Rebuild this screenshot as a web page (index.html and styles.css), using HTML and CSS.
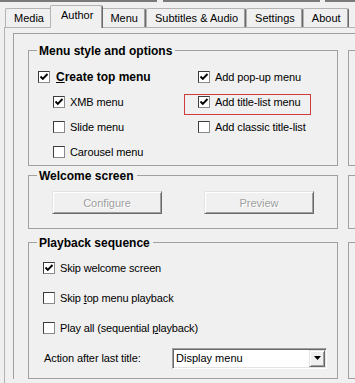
FILE: index.html
```html
<!DOCTYPE html>
<html>
<head>
<meta charset="utf-8">
<link rel="stylesheet" href="styles.css">
</head>
<body>
<div class="topbar"><span class="seg seg-a"></span><span class="seg seg-b"></span><span class="seg seg-c"></span></div>
<div class="tabs">
  <div class="tab">Media</div>
  <div class="tab active">Author</div>
  <div class="tab">Menu</div>
  <div class="tab">Subtitles &amp; Audio</div>
  <div class="tab">Settings</div>
  <div class="tab">About</div>
</div>
<div class="panel">
  <div class="frame">
    <div class="grid">
      <section class="group">
        <div class="gtitle">Menu style and options</div>
        <div class="g1body">
          <div class="col-left">
            <div class="opt main"><span class="cb"><svg viewBox="0 0 10 10"><polyline points="1.5,4.5 3.8,6.8 8.5,2"/></svg></span><span class="blabel"><u>C</u>reate top menu</span></div>
            <div class="opt sub"><span class="cb"><svg viewBox="0 0 10 10"><polyline points="1.5,4.5 3.8,6.8 8.5,2"/></svg></span><span>XMB menu</span></div>
            <div class="opt sub"><span class="cb"></span><span>Slide menu</span></div>
            <div class="opt sub"><span class="cb"></span><span>Carousel menu</span></div>
          </div>
          <div class="col-right">
            <div class="ropt"><span class="cb"><svg viewBox="0 0 10 10"><polyline points="1.5,4.5 3.8,6.8 8.5,2"/></svg></span><span>Add pop-up menu</span></div>
            <div class="ropt hl"><span class="cb"><svg viewBox="0 0 10 10"><polyline points="1.5,4.5 3.8,6.8 8.5,2"/></svg></span><span>Add title-list menu</span></div>
            <div class="ropt last"><span class="cb"></span><span>Add classic title-list</span></div>
          </div>
        </div>
      </section>
      <div class="ghost"></div>

      <section class="group row2">
        <div class="gtitle">Welcome screen</div>
        <div class="g2body">
          <div class="btn disabled">Configure</div>
          <div class="btn disabled">Preview</div>
        </div>
      </section>
      <div class="ghost row2"></div>

      <section class="group row3">
        <div class="gtitle">Playback sequence</div>
        <div class="g3body">
          <div class="opt3"><span class="cb"><svg viewBox="0 0 10 10"><polyline points="1.5,4.5 3.8,6.8 8.5,2"/></svg></span><span>Skip welcome screen</span></div>
          <div class="opt3"><span class="cb"></span><span>Skip <u>t</u>op menu playback</span></div>
          <div class="opt3"><span class="cb"></span><span>Play all (sequential <u>p</u>layback)</span></div>
          <div class="action">
            <span class="alabel">Action after last title:</span>
            <div class="select"><span class="sel-text">Display menu</span><span class="sel-btn"><svg viewBox="0 0 7 4"><polygon points="0,0 7,0 3.5,4"/></svg></span></div>
          </div>
        </div>
      </section>
      <div class="ghost row3"></div>
    </div>
  </div>
</div>
</body>
</html>
```
FILE: styles.css
```css
html, body {
  margin: 0;
  padding: 0;
}
body {
  width: 355px;
  height: 383px;
  overflow: hidden;
  background: #f0f0f0;
  font-family: "Liberation Sans", Arial, sans-serif;
  font-size: 11px;
  color: #000;
}

/* strip of the window above */
.topbar {
  display: flex;
  height: 2px;
}
.seg {
  display: block;
  height: 2px;
  background: #7a7a7a;
}
.seg-a { width: 157px; }
.seg-b { width: 157px; margin-left: 6px; }
.seg-c { flex: 1; margin-left: 5px; }

/* tabs */
.tabs {
  display: flex;
  align-items: flex-end;
  height: 25px;
  margin-left: 4px;
  padding-left: 1px;
  border-bottom: 1px solid #b4b4b4;
}
.tab {
  height: 19px;
  box-sizing: border-box;
  padding: 0 7px 1px 8px;
  display: flex;
  align-items: center;
  border-top: 1px solid #b4b4b4;
  border-left: 1px solid #b4b4b4;
  border-right: 1px solid #696969;
  box-shadow: inset -1px 0 0 #a0a0a0;
  border-radius: 2px 2px 0 0;
  white-space: nowrap;
  background: #f0f0f0;
}
.tab.active {
  position: relative;
  z-index: 1;
  height: 23px;
  margin: 0 -2px -1px;
  padding: 0 9px 4px 10px;
}

/* tab page */
.panel {
  margin-left: 4px;
  border-left: 1px solid #b4b4b4;
  padding: 5px 0 0 8px;
  height: 350px;
  overflow: hidden;
}
.frame {
  border-top: 1px solid #a0a0a0;
  border-left: 1px solid #a0a0a0;
  padding: 16px 0 0 14px;
  height: 329px;
  overflow: hidden;
}
.grid {
  display: grid;
  grid-template-columns: 310px 310px;
  column-gap: 10px;
}

.group {
  border: 1px solid #a0a0a0;
}
.ghost {
  border: 1px solid #a0a0a0;
}
.row2 { margin-top: 9px; }
.row3 { margin-top: 13px; }

.gtitle {
  width: fit-content;
  margin: -7px 0 0 8px;
  padding: 0 3px 0 2px;
  background: #f0f0f0;
  font-weight: bold;
  font-size: 12px;
  line-height: 14px;
}

/* checkboxes */
.cb {
  flex: none;
  width: 12px;
  height: 12px;
  box-sizing: border-box;
  border: 1px solid #3c3c3c;
  border-right-color: #8a8a8a;
  border-bottom-color: #8a8a8a;
  background: #fff;
  display: flex;
  align-items: center;
  justify-content: center;
}
.cb svg {
  width: 10px;
  height: 10px;
  fill: none;
  stroke: #000;
  stroke-width: 1.9;
}

/* group 1 */
.g1body {
  display: flex;
  padding: 6px 0 1px 9px;
}
.col-left { width: 146px; }
.col-right { width: 127px; }
.opt {
  height: 25px;
  display: flex;
  align-items: center;
  gap: 5px;
  letter-spacing: -0.1px;
}
.opt.main { gap: 6px; }
.opt.sub { padding-left: 15px; }
.blabel {
  font-weight: bold;
  font-size: 12px;
  letter-spacing: 0;
}
.ropt {
  height: 25px;
  box-sizing: border-box;
  display: flex;
  align-items: center;
  gap: 5px;
  padding-left: 14px;
  white-space: nowrap;
  letter-spacing: -0.1px;
}
.ropt.hl {
  margin-top: 5px;
  height: 21px;
  border: 1px solid #d03c3c;
  padding-left: 13px;
  padding-bottom: 5px;
}
.ropt.last { height: 23px; }

/* group 2 */
.g2body {
  display: flex;
  justify-content: space-between;
  padding: 8px 23px 14px;
}
.btn {
  width: 110px;
  height: 23px;
  box-sizing: border-box;
  display: flex;
  align-items: center;
  justify-content: center;
  border: 1px solid;
  border-color: #e3e3e3 #696969 #696969 #e3e3e3;
  box-shadow: inset 1px 1px 0 #fff, inset -1px -1px 0 #a0a0a0;
  background: #f0f0f0;
}
.btn.disabled {
  color: #a0a0a0;
  text-shadow: 1px 1px 0 #fff;
}

/* group 3 */
.g3body {
  padding: 3px 0 5px 14px;
}
.opt3 {
  height: 30px;
  display: flex;
  align-items: center;
  gap: 5px;
  white-space: nowrap;
  letter-spacing: -0.15px;
}
.action {
  height: 30px;
  display: grid;
  grid-template-columns: 129px 155px;
  align-items: center;
}
.alabel {
  padding-left: 1px;
  letter-spacing: -0.1px;
}
.select {
  height: 21px;
  box-sizing: border-box;
  display: flex;
  align-items: stretch;
  padding: 1px;
  border: 1px solid;
  border-color: #a0a0a0 #fff #fff #a0a0a0;
  box-shadow: inset 1px 1px 0 #696969, inset -1px -1px 0 #e3e3e3;
  background: #fff;
}
.sel-text {
  flex: 1;
  display: flex;
  align-items: center;
  padding-left: 2px;
}
.sel-btn {
  width: 16px;
  box-sizing: border-box;
  display: flex;
  align-items: center;
  justify-content: center;
  border: 1px solid;
  border-color: #e3e3e3 #696969 #696969 #e3e3e3;
  box-shadow: inset 1px 1px 0 #fff, inset -1px -1px 0 #a0a0a0;
  background: #f0f0f0;
}
.sel-btn svg {
  width: 7px;
  height: 4px;
  fill: #000;
}
```
